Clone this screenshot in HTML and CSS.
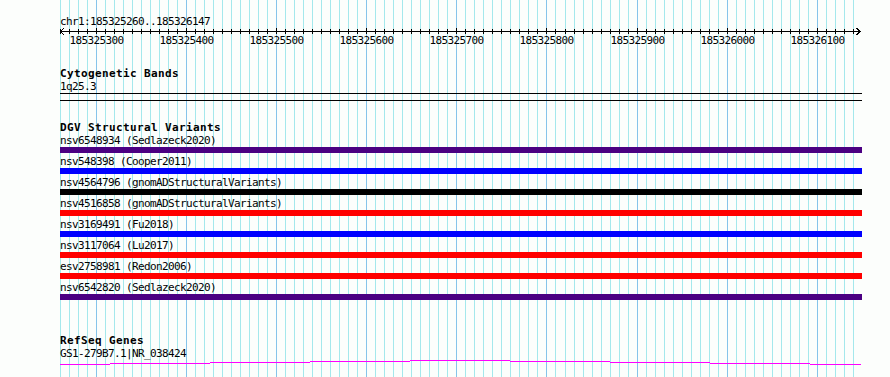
FILE: index.html
```html
<!DOCTYPE html>
<html>
<head>
    <meta charset="utf-8">
    <title>chr1:185325260..185326147</title>
    <link rel="stylesheet" href="styles.css">
</head>
<body>
<div class="browser">
    <svg class="grid" id="grid" width="890" height="377"></svg>
    <div class="tracks">
        <div class="locus">chr1:185325260..185326147</div>
        <svg class="ruler" id="ruler" width="802" height="21"></svg>

        <div class="track-title cyto">Cytogenetic Bands</div>
        <div class="label">1q25.3</div>
        <div class="band"></div>

        <div class="track-title dgv">DGV Structural Variants</div>
        <div class="variant"><div class="label">nsv6548934 (Sedlazeck2020)</div><div class="bar indigo"></div></div>
        <div class="variant"><div class="label">nsv548398 (Cooper2011)</div><div class="bar blue"></div></div>
        <div class="variant"><div class="label">nsv4564796 (gnomADStructuralVariants)</div><div class="bar black"></div></div>
        <div class="variant"><div class="label">nsv4516858 (gnomADStructuralVariants)</div><div class="bar red"></div></div>
        <div class="variant"><div class="label">nsv3169491 (Fu2018)</div><div class="bar blue"></div></div>
        <div class="variant"><div class="label">nsv3117064 (Lu2017)</div><div class="bar red"></div></div>
        <div class="variant"><div class="label">esv2758981 (Redon2006)</div><div class="bar red"></div></div>
        <div class="variant"><div class="label">nsv6542820 (Sedlazeck2020)</div><div class="bar indigo"></div></div>

        <div class="track-title refseq">RefSeq Genes</div>
        <div class="label">GS1-279B7.1|NR_038424</div>
        <svg class="gene" id="gene" width="802" height="5"></svg>
    </div>
</div>

<script>
    // 185325260..185326147 drawn across 800px
    const start = 185325260;
    const scale = 800 / 888;
    const ns = 'http://www.w3.org/2000/svg';

    function el(name, attrs, parent) {
        const e = document.createElementNS(ns, name);
        for (const k in attrs) e.setAttribute(k, attrs[k]);
        parent.appendChild(e);
        return e;
    } // el sonu

    const grid = document.getElementById('grid');
    const ruler = document.getElementById('ruler');
    const gene = document.getElementById('gene');

    el('line', {x1: 0, y1: 3.5, x2: 800, y2: 3.5, class: 'axis'}, ruler);
    el('polyline', {points: '4,0 0.5,3.5 4,7', class: 'axis'}, ruler);
    el('polyline', {points: '796.5,0 800,3.5 796.5,7', class: 'axis'}, ruler);

    for (let k = 0; k <= 88; k++) {
        const major = k % 10 === 4;
        const gx = Math.round(60 + 10 * k * scale) + 0.5;
        el('line', {x1: gx, y1: 0, x2: gx, y2: 377, class: major ? 'major' : 'minor'}, grid);

        const rx = Math.round(10 * k * scale) + 0.5;
        el('line', {x1: rx, y1: major ? 0 : 1, x2: rx, y2: 6, class: 'axis'}, ruler);
        if (major) {
            const t = el('text', {x: rx, y: 16, class: 'tick-label'}, ruler);
            t.textContent = start + 10 * k;
        }
    }

    // intron connector: pixel steps up to the middle and back down
    const steps = [[0, 50, 4], [50, 150, 3], [150, 250, 2], [250, 350, 1], [350, 450, 0],
                   [450, 550, 1], [550, 650, 2], [650, 750, 3], [750, 801, 4]];
    steps.forEach(function (s) {
        el('rect', {x: s[0], y: s[2], width: s[1] - s[0], height: 1, class: 'intron'}, gene);
    });
</script>
</body>
</html>
```

FILE: styles.css
```css
body {margin: 0; background: #fcfefc;}

.browser {
    position: relative;
    width: 890px;
    height: 377px;
    overflow: hidden;
    background: #fcfefc;
    color: #000;
    font: 11px/13px "DejaVu Sans Mono", monospace;
    letter-spacing: -.62px;}

.grid {position: absolute; left: 0; top: 0;}
.grid line {shape-rendering: crispEdges; stroke-width: 1;}
.grid .minor {stroke: #a4e8ec;}
.grid .major {stroke: #86c4ea;}

.tracks {
    position: relative;
    width: 802px;
    padding: 15px 0 0 60px;}

.locus, .label {height: 13px; white-space: pre;}

.ruler {display: block;}
.ruler .axis {stroke: #000; stroke-width: 1; fill: none; shape-rendering: crispEdges;}
.tick-label {
    font: 11px "DejaVu Sans Mono", monospace;
    letter-spacing: -.62px;
    text-anchor: middle;
    fill: #000;}

.track-title {
    height: 12px;
    font-size: 11px;
    line-height: 12px;
    font-weight: bold;
    letter-spacing: .38px;}
.cyto {margin-top: 19px;}
.dgv {margin-top: 21px;}
.refseq {margin-top: 35px;}

.band {
    height: 6px;
    border-top: 1px solid #000;
    border-bottom: 1px solid #000;}

.bar {height: 6px; margin-bottom: 2px;}
.indigo {background: #4b0082;}
.blue {background: #0000ff;}
.black {background: #000;}
.red {background: #ff0000;}

.gene {display: block;}
.gene .intron {fill: #ff00ff; shape-rendering: crispEdges;}
```
